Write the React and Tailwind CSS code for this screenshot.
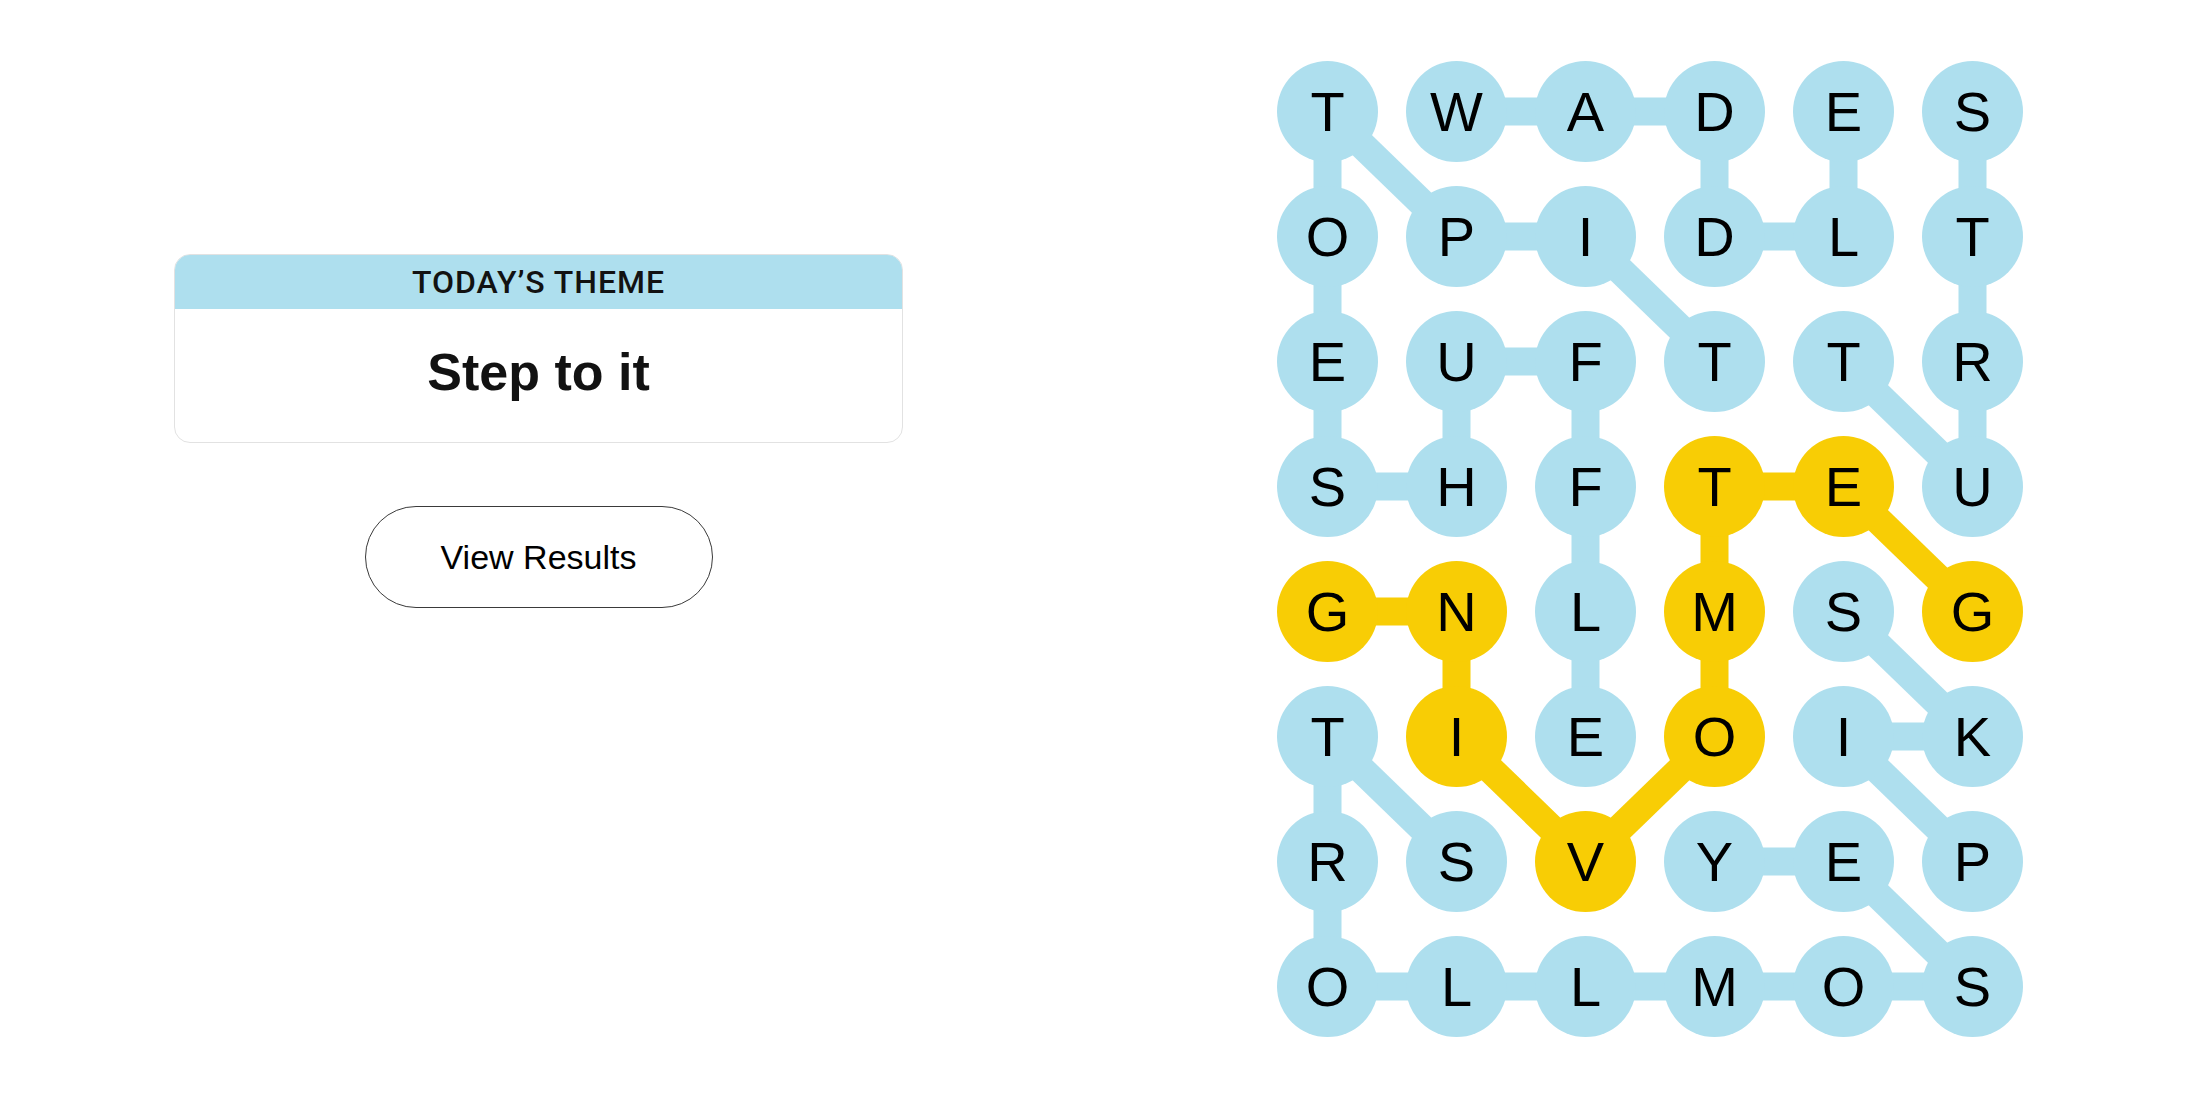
const ROWS = [
  "TWADES",
  "OPIDLT",
  "EUFTTR",
  "SHFTEU",
  "GNLMSG",
  "TIEOIK",
  "RSVYEP",
  "OLLMOS",
];

// cells found in the spangram, as "row,col"
const FOUND = new Set(["3,3", "3,4", "4,0", "4,1", "4,3", "4,5", "5,1", "5,3", "6,2"]);

// links between cells: [r1, c1, r2, c2]
const BLUE_LINKS = [
  [0, 0, 1, 0],
  [0, 0, 1, 1],
  [0, 1, 0, 2],
  [0, 2, 0, 3],
  [0, 3, 1, 3],
  [0, 4, 1, 4],
  [0, 5, 1, 5],
  [1, 0, 2, 0],
  [1, 1, 1, 2],
  [1, 2, 2, 3],
  [1, 3, 1, 4],
  [1, 5, 2, 5],
  [2, 0, 3, 0],
  [2, 1, 2, 2],
  [2, 1, 3, 1],
  [2, 2, 3, 2],
  [2, 4, 3, 5],
  [2, 5, 3, 5],
  [3, 0, 3, 1],
  [3, 2, 4, 2],
  [4, 2, 5, 2],
  [4, 4, 5, 5],
  [5, 0, 6, 0],
  [5, 0, 6, 1],
  [5, 4, 5, 5],
  [5, 4, 6, 5],
  [6, 0, 7, 0],
  [6, 3, 6, 4],
  [6, 4, 7, 5],
  [7, 0, 7, 1],
  [7, 1, 7, 2],
  [7, 2, 7, 3],
  [7, 3, 7, 4],
  [7, 4, 7, 5],
];

const YELLOW_LINKS = [
  [3, 3, 3, 4],
  [3, 3, 4, 3],
  [3, 4, 4, 5],
  [4, 0, 4, 1],
  [4, 1, 5, 1],
  [4, 3, 5, 3],
  [5, 1, 6, 2],
  [5, 3, 6, 2],
];

const CELL = 101;
const COL_STEP = 129;
const ROW_STEP = 125;

const cx = (c) => CELL / 2 + c * COL_STEP;
const cy = (r) => CELL / 2 + r * ROW_STEP;

function Links({ links, color }) {
  return links.map(([r1, c1, r2, c2]) => (
    <line
      key={`${r1}-${c1}-${r2}-${c2}`}
      x1={cx(c1)}
      y1={cy(r1)}
      x2={cx(c2)}
      y2={cy(r2)}
      stroke={color}
      strokeWidth="28"
    />
  ));
}

function Board() {
  return (
    <div className="relative">
      <svg className="absolute inset-0" width="746" height="976">
        <Links links={BLUE_LINKS} color="#aedfee" />
        <Links links={YELLOW_LINKS} color="#f8cd05" />
      </svg>
      <div className="relative grid grid-cols-[repeat(6,101px)] gap-x-[28px] gap-y-[24px]">
        {ROWS.map((row, r) =>
          row.split("").map((letter, c) => (
            <div
              key={`${r}-${c}`}
              className={`w-[101px] h-[101px] rounded-full flex items-center justify-center text-[56px] leading-none text-black ${
                FOUND.has(`${r},${c}`) ? "bg-[#f8cd05]" : "bg-[#aedfee]"
              }`}
            >
              {letter}
            </div>
          ))
        )}
      </div>
    </div>
  );
}

function ThemeCard() {
  return (
    <div className="w-[729px] rounded-[16px] border border-[#e2e2e2] overflow-hidden bg-white">
      <div className="h-[54px] bg-[#aedfee] flex items-center justify-center font-['Roboto',sans-serif] font-medium text-[32px] tracking-[0.03em] text-[#121212]">
        TODAY’S THEME
      </div>
      <div className="h-[133px] flex items-center justify-center pb-2 text-[52px] font-bold text-[#121212]">
        Step to it
      </div>
    </div>
  );
}

export default function App() {
  return (
    <div className="w-[2200px] h-[1100px] bg-white flex font-['Liberation_Sans',Arial,sans-serif]">
      <div className="w-[1100px] pl-[174px] pt-[254px]">
        <ThemeCard />
        <div className="w-[729px] flex justify-center mt-[63px]">
          <button className="w-[348px] h-[102px] rounded-full border-[1.5px] border-[#3a3a3a] bg-white text-[34px] text-black">
            View Results
          </button>
        </div>
      </div>
      <div className="w-[1100px] flex justify-center pt-[61px]">
        <Board />
      </div>
    </div>
  );
}
